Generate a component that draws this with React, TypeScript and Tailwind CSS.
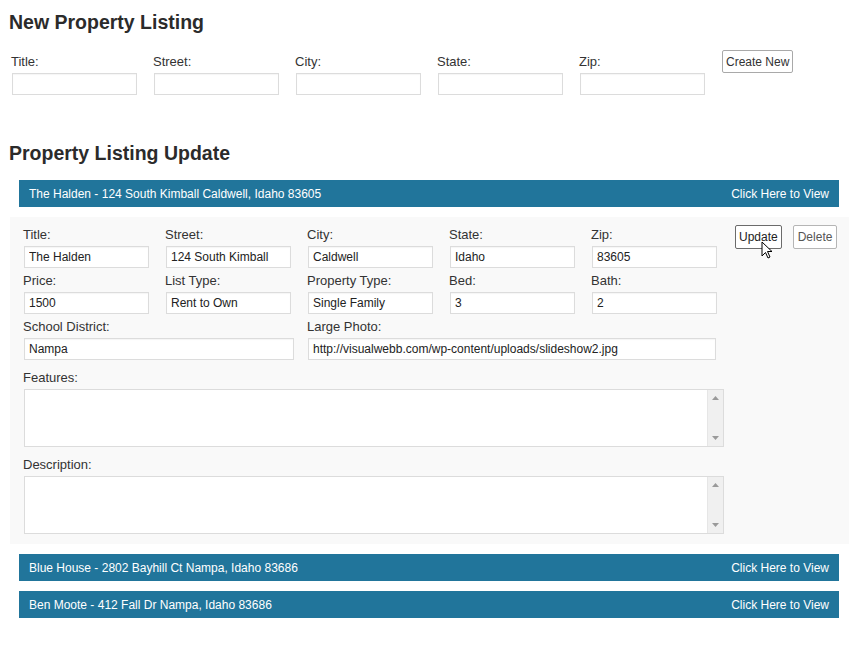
import React from 'react';

const font = { fontFamily: '"Liberation Sans", Arial, sans-serif' };

const Field: React.FC<{ label: string; value?: string; width?: string; col?: string }> = ({ label, value = '', width = 'w-[125px]', col = 'w-[142px]' }) => (
  <div className={`${col} shrink-0`}>
    <div className="text-[13px] leading-[16px] text-[#333] -ml-px">{label}</div>
    <input
      readOnly
      value={value}
      className={`${width} mt-[3px] h-[22px] bg-white border border-[#dcdcdc] px-[4px] text-[12px] text-[#222] outline-none shadow-[inset_0_1px_1px_rgba(0,0,0,0.04)]`}
    />
  </div>
);

const Bar: React.FC<{ text: string }> = ({ text }) => (
  <div className="ml-[10px] mr-[13px] h-[27px] bg-[#21759b] text-white text-[12px] flex items-center justify-between px-[10px]">
    <span>{text}</span>
    <span>Click Here to View</span>
  </div>
);

const Area: React.FC<{ label: string; top: string }> = ({ label, top }) => (
  <div className={top}>
    <div className="text-[13px] leading-[16px] text-[#333] -ml-px">{label}</div>
    <div className="mt-[3px] w-[700px] h-[58px] flex bg-white border border-[#dcdcdc]">
      <textarea readOnly className="flex-1 resize-none outline-none bg-white" />
      <div className="w-[16px] bg-[#f0f0f0] border-l border-[#e6e6e6] flex flex-col items-center justify-between py-[6px]">
        <svg width="7" height="4" viewBox="0 0 7 4"><path d="M0 4L3.5 0L7 4Z" fill="#9a9a9a" /></svg>
        <svg width="7" height="4" viewBox="0 0 7 4"><path d="M0 0L3.5 4L7 0Z" fill="#9a9a9a" /></svg>
      </div>
    </div>
  </div>
);

export default function App() {
  return (
    <div style={font} className="w-[852px] h-[658px] bg-white pl-[9px] pt-[11px] text-[#333]">
      <h2 className="text-[19.5px] leading-[23px] font-bold text-[#2b2b2b]">New Property Listing</h2>

      <div className="flex mt-[16px] pl-[3px]">
        <div className="flex pt-[4px]">
          <Field label="Title:" />
          <Field label="Street:" />
          <Field label="City:" />
          <Field label="State:" />
          <Field label="Zip:" />
        </div>
        <button className="h-[23px] px-[3px] bg-white border border-[#a9a9a9] rounded-[2px] text-[12px] text-[#333]">Create New</button>
      </div>

      <h2 className="mt-[47px] text-[19.5px] leading-[23px] font-bold text-[#2b2b2b]">Property Listing Update</h2>

      <div className="mt-[15px]">
        <Bar text="The Halden - 124 South Kimball Caldwell, Idaho 83605" />
      </div>

      <div className="mt-[10px] ml-px mr-[3px] bg-[#f9f9f9] pl-[14px] pt-[10px] pb-[10px] relative">
        <div className="flex">
          <div>
            <div className="flex">
              <Field label="Title:" value="The Halden" />
              <Field label="Street:" value="124 South Kimball" />
              <Field label="City:" value="Caldwell" />
              <Field label="State:" value="Idaho" />
              <Field label="Zip:" value="83605" />
            </div>
            <div className="flex mt-[5px]">
              <Field label="Price:" value="1500" />
              <Field label="List Type:" value="Rent to Own" />
              <Field label="Property Type:" value="Single Family" />
              <Field label="Bed:" value="3" />
              <Field label="Bath:" value="2" />
            </div>
            <div className="flex mt-[5px]">
              <Field label="School District:" value="Nampa" col="w-[284px]" width="w-[270px]" />
              <Field label="Large Photo:" value="http://visualwebb.com/wp-content/uploads/slideshow2.jpg" col="w-[410px]" width="w-[408px]" />
            </div>
          </div>
          <div className="flex gap-[11px] -mt-[2px] ml-px items-start">
            <button className="h-[24px] px-[3px] bg-white border border-[#6b6b6b] rounded-[2px] text-[12px] text-[#222]">Update</button>
            <button className="h-[24px] px-[4px] bg-white border border-[#b5b5b5] rounded-[2px] text-[12px] text-[#555]">Delete</button>
          </div>
        </div>
        <Area label="Features:" top="mt-[10px]" />
        <Area label="Description:" top="mt-[10px]" />

        <svg className="absolute left-[751px] top-[24px]" width="12" height="19" viewBox="0 0 12 19">
          <path d="M1 1L1 15L4.5 11.5L7 17L9 16L6.5 10.5L11 10.5Z" fill="#fff" stroke="#000" strokeWidth="1" strokeLinejoin="round" />
        </svg>
      </div>

      <div className="mt-[10px]">
        <Bar text="Blue House - 2802 Bayhill Ct Nampa, Idaho 83686" />
      </div>
      <div className="mt-[10px]">
        <Bar text="Ben Moote - 412 Fall Dr Nampa, Idaho 83686" />
      </div>
    </div>
  );
}
